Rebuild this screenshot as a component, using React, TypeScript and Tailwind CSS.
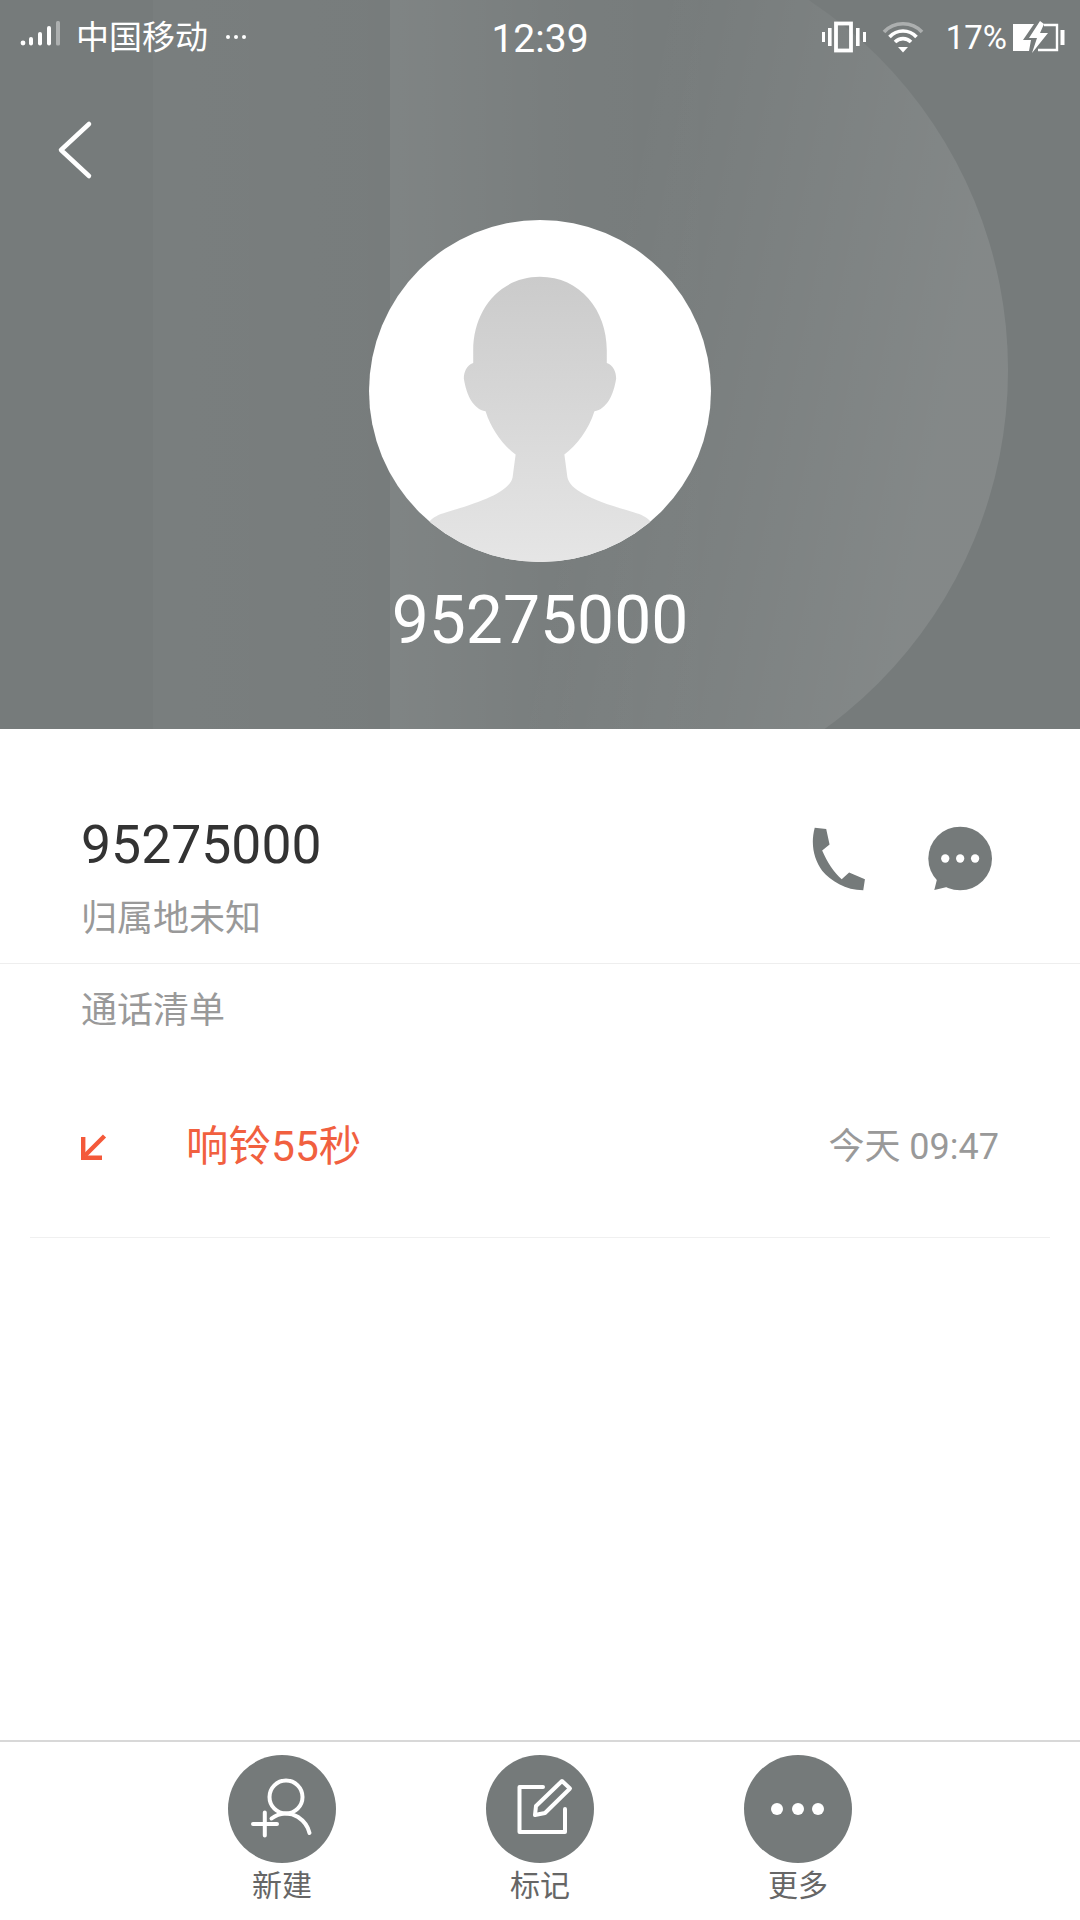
const FONT = "font-['Roboto','Noto_Sans_CJK_SC',sans-serif]";

function Backdrop() {
  return (
    <svg className="absolute inset-0" width="1080" height="729" viewBox="0 0 1080 729">
      <defs>
        <linearGradient id="bgA" x1="0" x2="1" y1="0" y2="0">
          <stop offset="0" stopColor="#fff" stopOpacity="0.07" />
          <stop offset="0.5" stopColor="#fff" stopOpacity="0.02" />
          <stop offset="1" stopColor="#fff" stopOpacity="0" />
        </linearGradient>
        <linearGradient id="bgB" x1="0" x2="1" y1="0" y2="0">
          <stop offset="0" stopColor="#fff" stopOpacity="0.025" />
          <stop offset="1" stopColor="#fff" stopOpacity="0.01" />
        </linearGradient>
        <linearGradient id="bgC" x1="0" x2="1" y1="0" y2="0.2">
          <stop offset="0.6" stopColor="#fff" stopOpacity="0" />
          <stop offset="1" stopColor="#fff" stopOpacity="0.1" />
        </linearGradient>
      </defs>
      <rect width="1080" height="729" fill="#767b7b" />
      <rect x="153" width="237" height="729" fill="url(#bgB)" />
      <rect x="390" width="340" height="729" fill="url(#bgA)" />
      <circle cx="565" cy="370" r="443" fill="url(#bgC)" />
    </svg>
  );
}

function StatusBar() {
  return (
    <div className="relative flex h-[74px] items-center justify-between px-[14px] text-white">
      <div className="flex w-[300px] items-center pl-[6px]">
        <svg width="42" height="28" viewBox="0 0 42 28" className="mt-[-6px]">
          <circle cx="3" cy="23" r="2.4" fill="#fff" />
          <rect x="9" y="17" width="4" height="8.5" rx="2" fill="#fff" />
          <rect x="18" y="12" width="4" height="13.5" rx="2" fill="#fff" />
          <rect x="27" y="6" width="4" height="19.5" rx="2" fill="#fff" />
          <rect x="36" y="1" width="4" height="24.5" rx="1.5" fill="#fff" fillOpacity="0.4" />
        </svg>
        <span className="ml-[14px] text-[33px] leading-none">中国移动</span>
        <span className="ml-[18px] flex gap-[4px]">
          <i className="size-[4px] rounded-full bg-white" />
          <i className="size-[4px] rounded-full bg-white" />
          <i className="size-[4px] rounded-full bg-white" />
        </span>
      </div>
      <span className="mt-[4px] text-[39px] leading-none">12:39</span>
      <div className="flex w-[300px] items-center justify-end">
        <svg width="48" height="32" viewBox="0 0 48 32">
          <rect x="16" y="2.5" width="15" height="27" fill="none" stroke="#fff" strokeWidth="3.8" />
          <rect x="2" y="11" width="3" height="10" fill="#fff" />
          <rect x="8" y="7" width="3.6" height="18" fill="#fff" />
          <rect x="36" y="7" width="3.6" height="18" fill="#fff" />
          <rect x="43" y="11" width="3" height="10" fill="#fff" />
        </svg>
        <svg width="42" height="32" viewBox="0 0 42 32" className="ml-[14px]">
          <path d="M2 11 C12 0 30 0 40 11" fill="none" stroke="#fff" strokeOpacity="0.4" strokeWidth="3.6" />
          <path d="M7.5 16 C15 8 27 8 34.5 16" fill="none" stroke="#fff" strokeWidth="3.6" />
          <path d="M13 21 C17.5 16.5 24.5 16.5 29 21" fill="none" stroke="#fff" strokeWidth="3.6" />
          <path d="M16 26 L26 26 L21 31.5 Z" fill="#fff" />
        </svg>
        <span className="ml-[22px] text-[33px] leading-none">17%</span>
        <svg width="54" height="32" viewBox="0 0 54 32" className="ml-[5px]">
          <path d="M1 3 H22 L11 19 H19 L17 30 H1 Z" fill="#fff" />
          <path d="M28 0 L17 17 H25 L20 32 L36 12 H28 L32 3 Z" fill="#fff" />
          <path d="M32 4 H45 V29 H26" fill="none" stroke="#fff" strokeWidth="2.4" />
          <rect x="48.5" y="9" width="4" height="15" fill="#fff" />
        </svg>
      </div>
    </div>
  );
}

function Avatar() {
  return (
    <div className="mx-auto h-[342px] w-[342px] overflow-hidden rounded-full bg-white">
      <svg width="342" height="342" viewBox="88 60 1024 1024">
        <defs>
          <linearGradient id="sil" x1="0" x2="0" y1="0" y2="1">
            <stop offset="0" stopColor="#cbcbcb" />
            <stop offset="1" stopColor="#e6e6e6" />
          </linearGradient>
        </defs>
        <path
          fill="url(#sil)"
          d="M600 230 C480 230 400 330 400 450 L400 488 C380 495 372 515 372 535 C380 585 400 625 437 633 C455 690 490 735 527 762 L518 830 C510 870 440 900 320 935 C295 942 280 950 270 962 L270 1100 L930 1100 L930 962 C920 950 905 942 880 935 C760 900 690 870 682 830 L673 762 C710 735 745 690 763 633 C800 625 820 585 828 535 C828 515 820 495 800 488 L800 450 C800 330 720 230 600 230 Z"
        />
      </svg>
    </div>
  );
}

function Header() {
  return (
    <header className="relative h-[729px] overflow-hidden">
      <Backdrop />
      <StatusBar />
      <div className="relative pl-[56px] pt-[44px]">
        <svg width="40" height="64" viewBox="0 0 40 64" className="block">
          <path d="M33 6 L5 32 L33 58" fill="none" stroke="#fff" strokeWidth="4.5" strokeLinecap="round" strokeLinejoin="round" />
        </svg>
      </div>
      <div className="relative mt-[38px]">
        <Avatar />
        <div className="mt-[21px] text-center text-[66px] leading-[76px] text-white">95275000</div>
      </div>
    </header>
  );
}

function Contact() {
  return (
    <section className="flex h-[235px] items-start justify-between border-b border-[#eeeeee] pl-[81px] pr-[88px]">
      <div className="pt-[85px]">
        <div className="text-[53.5px] leading-[62px] text-[#333333]">95275000</div>
        <div className="mt-[18px] text-[36px] leading-[50px] text-[#999999]">归属地未知</div>
      </div>
      <div className="flex items-center gap-[61px] pt-[97px]">
        <svg width="54" height="64" viewBox="160 110 160 190">
          <path
            fill="#757a7a"
            d="M168 112 L202 116 L212 162 L190 180 C205 215 225 245 248 265 L270 245 L317 265 L312 298 C260 298 215 270 190 240 C165 205 155 160 168 112 Z"
          />
        </svg>
        <svg width="65" height="65" viewBox="500 108 196 196">
          <circle cx="600" cy="206" r="96" fill="#757a7a" />
          <path d="M532 262 L522 301 L570 290 Z" fill="#757a7a" />
          <circle cx="555" cy="206" r="12.5" fill="#fff" />
          <circle cx="600" cy="206" r="12.5" fill="#fff" />
          <circle cx="645" cy="206" r="12.5" fill="#fff" />
        </svg>
      </div>
    </section>
  );
}

function CallList() {
  return (
    <section>
      <div className="pl-[81px] pt-[22px] text-[36px] leading-[50px] text-[#999999]">通话清单</div>
      <div className="mx-[30px] flex h-[202px] items-center justify-between border-b border-[#f0f0f0] pl-[51px] pr-[51px] pt-[20px]">
        <div className="flex items-center">
          <svg width="26" height="26" viewBox="0 0 26 26">
            <path d="M23.5 2 L4 21.5" stroke="#f4593a" strokeWidth="4.4" fill="none" />
            <path d="M2.2 3 V23.8 H21" stroke="#f4593a" strokeWidth="4.4" fill="none" />
          </svg>
          <span className="ml-[79px] text-[42.5px] leading-[50px] text-[#f1603f]">响铃55秒</span>
        </div>
        <span className="text-[36px] leading-[50px] text-[#999999]">今天 09:47</span>
      </div>
    </section>
  );
}

function ActionCircle({ label, children }: { label: string; children: React.ReactNode }) {
  return (
    <div className="flex w-[108px] flex-col items-center">
      <div className="size-[108px] rounded-full bg-[#757a7a]">
        <svg width="108" height="108" viewBox="0 0 108 108">
          {children}
        </svg>
      </div>
      <span className="mt-[3px] whitespace-nowrap text-[30px] leading-[40px] text-[#666666]">{label}</span>
    </div>
  );
}

function BottomBar() {
  const s = { fill: "none", stroke: "#fff", strokeWidth: 4, strokeLinecap: "round" as const, strokeLinejoin: "round" as const };
  return (
    <footer className="mt-[502px] flex h-[180px] justify-center gap-[150px] border-t-2 border-[#d8d8d8] pt-[13px]">
      <ActionCircle label="新建">
        <circle cx="58" cy="42" r="16.5" {...s} />
        <path d="M43.5 63.5 C52 57 62 57 70 62 C76 66 80 71 81.5 78" {...s} />
        <path d="M25 69 H49 M36.8 57.5 V80.5" {...s} />
      </ActionCircle>
      <ActionCircle label="标记">
        <path d="M57 32 H33.5 V77 H79 V54" {...s} />
        <path d="M50 51 L76 26 L84 33.5 L59 58 L49 60 Z" {...s} />
      </ActionCircle>
      <ActionCircle label="更多">
        <circle cx="33" cy="54" r="6" fill="#fff" />
        <circle cx="54" cy="54" r="6" fill="#fff" />
        <circle cx="74" cy="54" r="6" fill="#fff" />
      </ActionCircle>
    </footer>
  );
}

export default function App() {
  return (
    <div className={`h-[1920px] w-[1080px] overflow-hidden bg-white ${FONT}`}>
      <Header />
      <Contact />
      <CallList />
      <BottomBar />
    </div>
  );
}
